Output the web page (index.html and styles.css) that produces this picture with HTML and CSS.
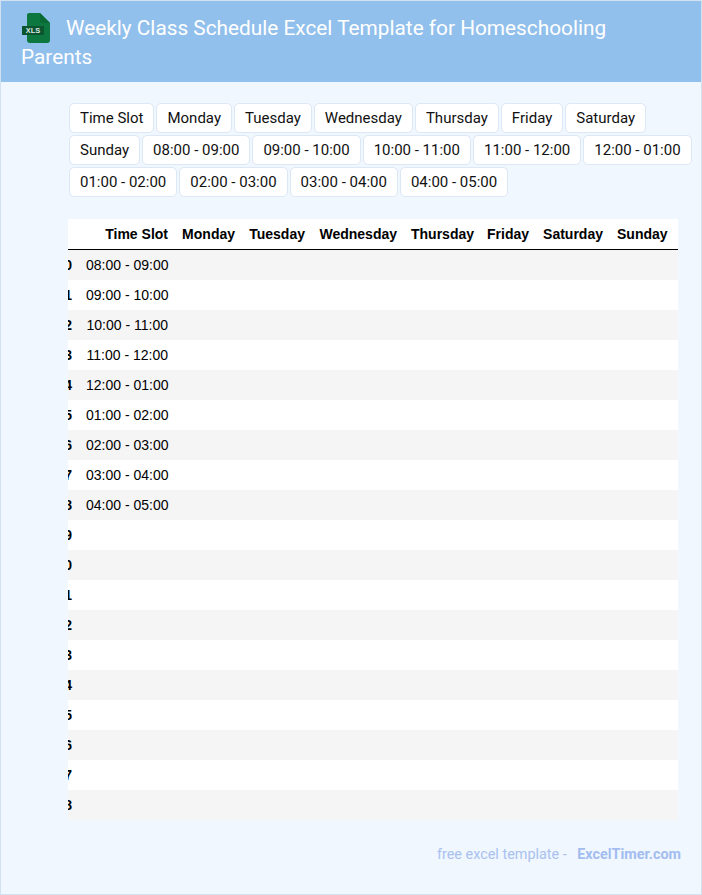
FILE: index.html
```html
<!DOCTYPE html>
<html lang="en">
<head>
<meta charset="utf-8">
<title>Weekly Class Schedule Excel Template for Homeschooling Parents</title>
<link rel="stylesheet" href="styles.css">
</head>
<body>
<div class="page">
  <header class="head">
    <h1 class="title"><svg class="xls" viewBox="0 0 30 30" width="30" height="30" aria-hidden="true"><path d="M6 2a2 2 0 0 1 2-2H19L29 10V27a3 3 0 0 1-3 3H9a3 3 0 0 1-3-3Z" fill="#0c773e"/><path d="M19 0L29 10H21a2 2 0 0 1-2-2Z" fill="#0a6a36"/><rect x="1" y="13" width="22" height="9" fill="#0a5530"/><text x="12" y="20" text-anchor="middle" class="xls-text">XLS</text></svg>Weekly Class Schedule Excel Template for Homeschooling Parents</h1>
  </header>
  <main class="body">
    <div class="tags">
      <span class="tag">Time Slot</span><span class="tag">Monday</span><span class="tag">Tuesday</span><span class="tag">Wednesday</span><span class="tag">Thursday</span><span class="tag">Friday</span><span class="tag">Saturday</span><span class="tag">Sunday</span><span class="tag">08:00 - 09:00</span><span class="tag">09:00 - 10:00</span><span class="tag">10:00 - 11:00</span><span class="tag">11:00 - 12:00</span><span class="tag">12:00 - 01:00</span><span class="tag">01:00 - 02:00</span><span class="tag">02:00 - 03:00</span><span class="tag">03:00 - 04:00</span><span class="tag">04:00 - 05:00</span>
    </div>
    <div class="table-wrap">
      <table class="sheet">
        <colgroup><col class="c0"><col class="c1"><col class="c2"><col class="c3"><col class="c4"><col class="c5"><col class="c6"><col class="c7"><col class="c8"></colgroup>
        <thead><tr><th></th><th>Time Slot</th><th>Monday</th><th>Tuesday</th><th>Wednesday</th><th>Thursday</th><th>Friday</th><th>Saturday</th><th>Sunday</th></tr></thead>
        <tbody>
          <tr><th>0</th><td>08:00 - 09:00</td><td></td><td></td><td></td><td></td><td></td><td></td><td></td></tr>
          <tr><th>1</th><td>09:00 - 10:00</td><td></td><td></td><td></td><td></td><td></td><td></td><td></td></tr>
          <tr><th>2</th><td>10:00 - 11:00</td><td></td><td></td><td></td><td></td><td></td><td></td><td></td></tr>
          <tr><th>3</th><td>11:00 - 12:00</td><td></td><td></td><td></td><td></td><td></td><td></td><td></td></tr>
          <tr><th>4</th><td>12:00 - 01:00</td><td></td><td></td><td></td><td></td><td></td><td></td><td></td></tr>
          <tr><th>5</th><td>01:00 - 02:00</td><td></td><td></td><td></td><td></td><td></td><td></td><td></td></tr>
          <tr><th>6</th><td>02:00 - 03:00</td><td></td><td></td><td></td><td></td><td></td><td></td><td></td></tr>
          <tr><th>7</th><td>03:00 - 04:00</td><td></td><td></td><td></td><td></td><td></td><td></td><td></td></tr>
          <tr><th>8</th><td>04:00 - 05:00</td><td></td><td></td><td></td><td></td><td></td><td></td><td></td></tr>
          <tr><th>9</th><td></td><td></td><td></td><td></td><td></td><td></td><td></td><td></td></tr>
          <tr><th>10</th><td></td><td></td><td></td><td></td><td></td><td></td><td></td><td></td></tr>
          <tr><th>11</th><td></td><td></td><td></td><td></td><td></td><td></td><td></td><td></td></tr>
          <tr><th>12</th><td></td><td></td><td></td><td></td><td></td><td></td><td></td><td></td></tr>
          <tr><th>13</th><td></td><td></td><td></td><td></td><td></td><td></td><td></td><td></td></tr>
          <tr><th>14</th><td></td><td></td><td></td><td></td><td></td><td></td><td></td><td></td></tr>
          <tr><th>15</th><td></td><td></td><td></td><td></td><td></td><td></td><td></td><td></td></tr>
          <tr><th>16</th><td></td><td></td><td></td><td></td><td></td><td></td><td></td><td></td></tr>
          <tr><th>17</th><td></td><td></td><td></td><td></td><td></td><td></td><td></td><td></td></tr>
          <tr><th>18</th><td></td><td></td><td></td><td></td><td></td><td></td><td></td><td></td></tr>
        </tbody>
      </table>
    </div>
    <footer class="foot">free excel template - <a class="brand">ExcelTimer.com</a></footer>
  </main>
</div>
</body>
</html>
```
FILE: styles.css
```css
* { box-sizing: border-box; }
html, body { margin: 0; padding: 0; }
body { font-family: Roboto, sans-serif; background: #f0f7ff; }
.page { width: 702px; height: 895px; border: 1px solid #d3e2f0; overflow: hidden; }
.head { background: #92c0ec; height: 81px; padding: 13px 20px 0; }
.title { margin: 0; font-size: 20.8px; line-height: 29px; font-weight: 400; color: #fff; }
.xls { display: inline-block; vertical-align: middle; width: 30px; height: 30px; margin: -3px 15px 0 0; }
.xls-text { font: 700 7.4px "Liberation Sans", sans-serif; fill: #dfe8e2; }
.body { padding: 21px 0 0 68px; }
.tags { display: flex; flex-wrap: wrap; gap: 2px; width: 624px; }
.tag { height: 30px; padding: 0 10px; line-height: 28px; font-size: 15px; color: #111; background: #fff; border: 1px solid #dce8f5; border-radius: 5px; }
.table-wrap { width: 610px; margin: 22px 0 0 -1px; overflow: hidden; background: #fff; }
.sheet { table-layout: fixed; width: 640px; margin-left: -30px; border-collapse: separate; border-spacing: 0; font: 14px "Liberation Sans", sans-serif; color: #000; }
.c0 { width: 41px; } .c1 { width: 96px; } .c2 { width: 67px; } .c3 { width: 70px; } .c4 { width: 92px; }
.c5 { width: 76px; } .c6 { width: 56px; } .c7 { width: 74px; } .c8 { width: 68px; }
.sheet th, .sheet td { height: 30px; padding: 0 7px; text-align: right; font-weight: 400; white-space: nowrap; }
.sheet th { font-weight: 700; }
.sheet tr > :last-child { padding-right: 11px; }
.sheet thead th { height: 31px; border-bottom: 1px solid #000; }
.sheet tbody tr:nth-child(odd) { background: #f5f5f5; }
.foot { width: 613px; margin: 26px 0 0 -1px; text-align: right; font-size: 14.4px; color: #a9c1ee; }
.brand { margin-left: 7px; font-weight: 700; color: #a3bdf0; }
```
